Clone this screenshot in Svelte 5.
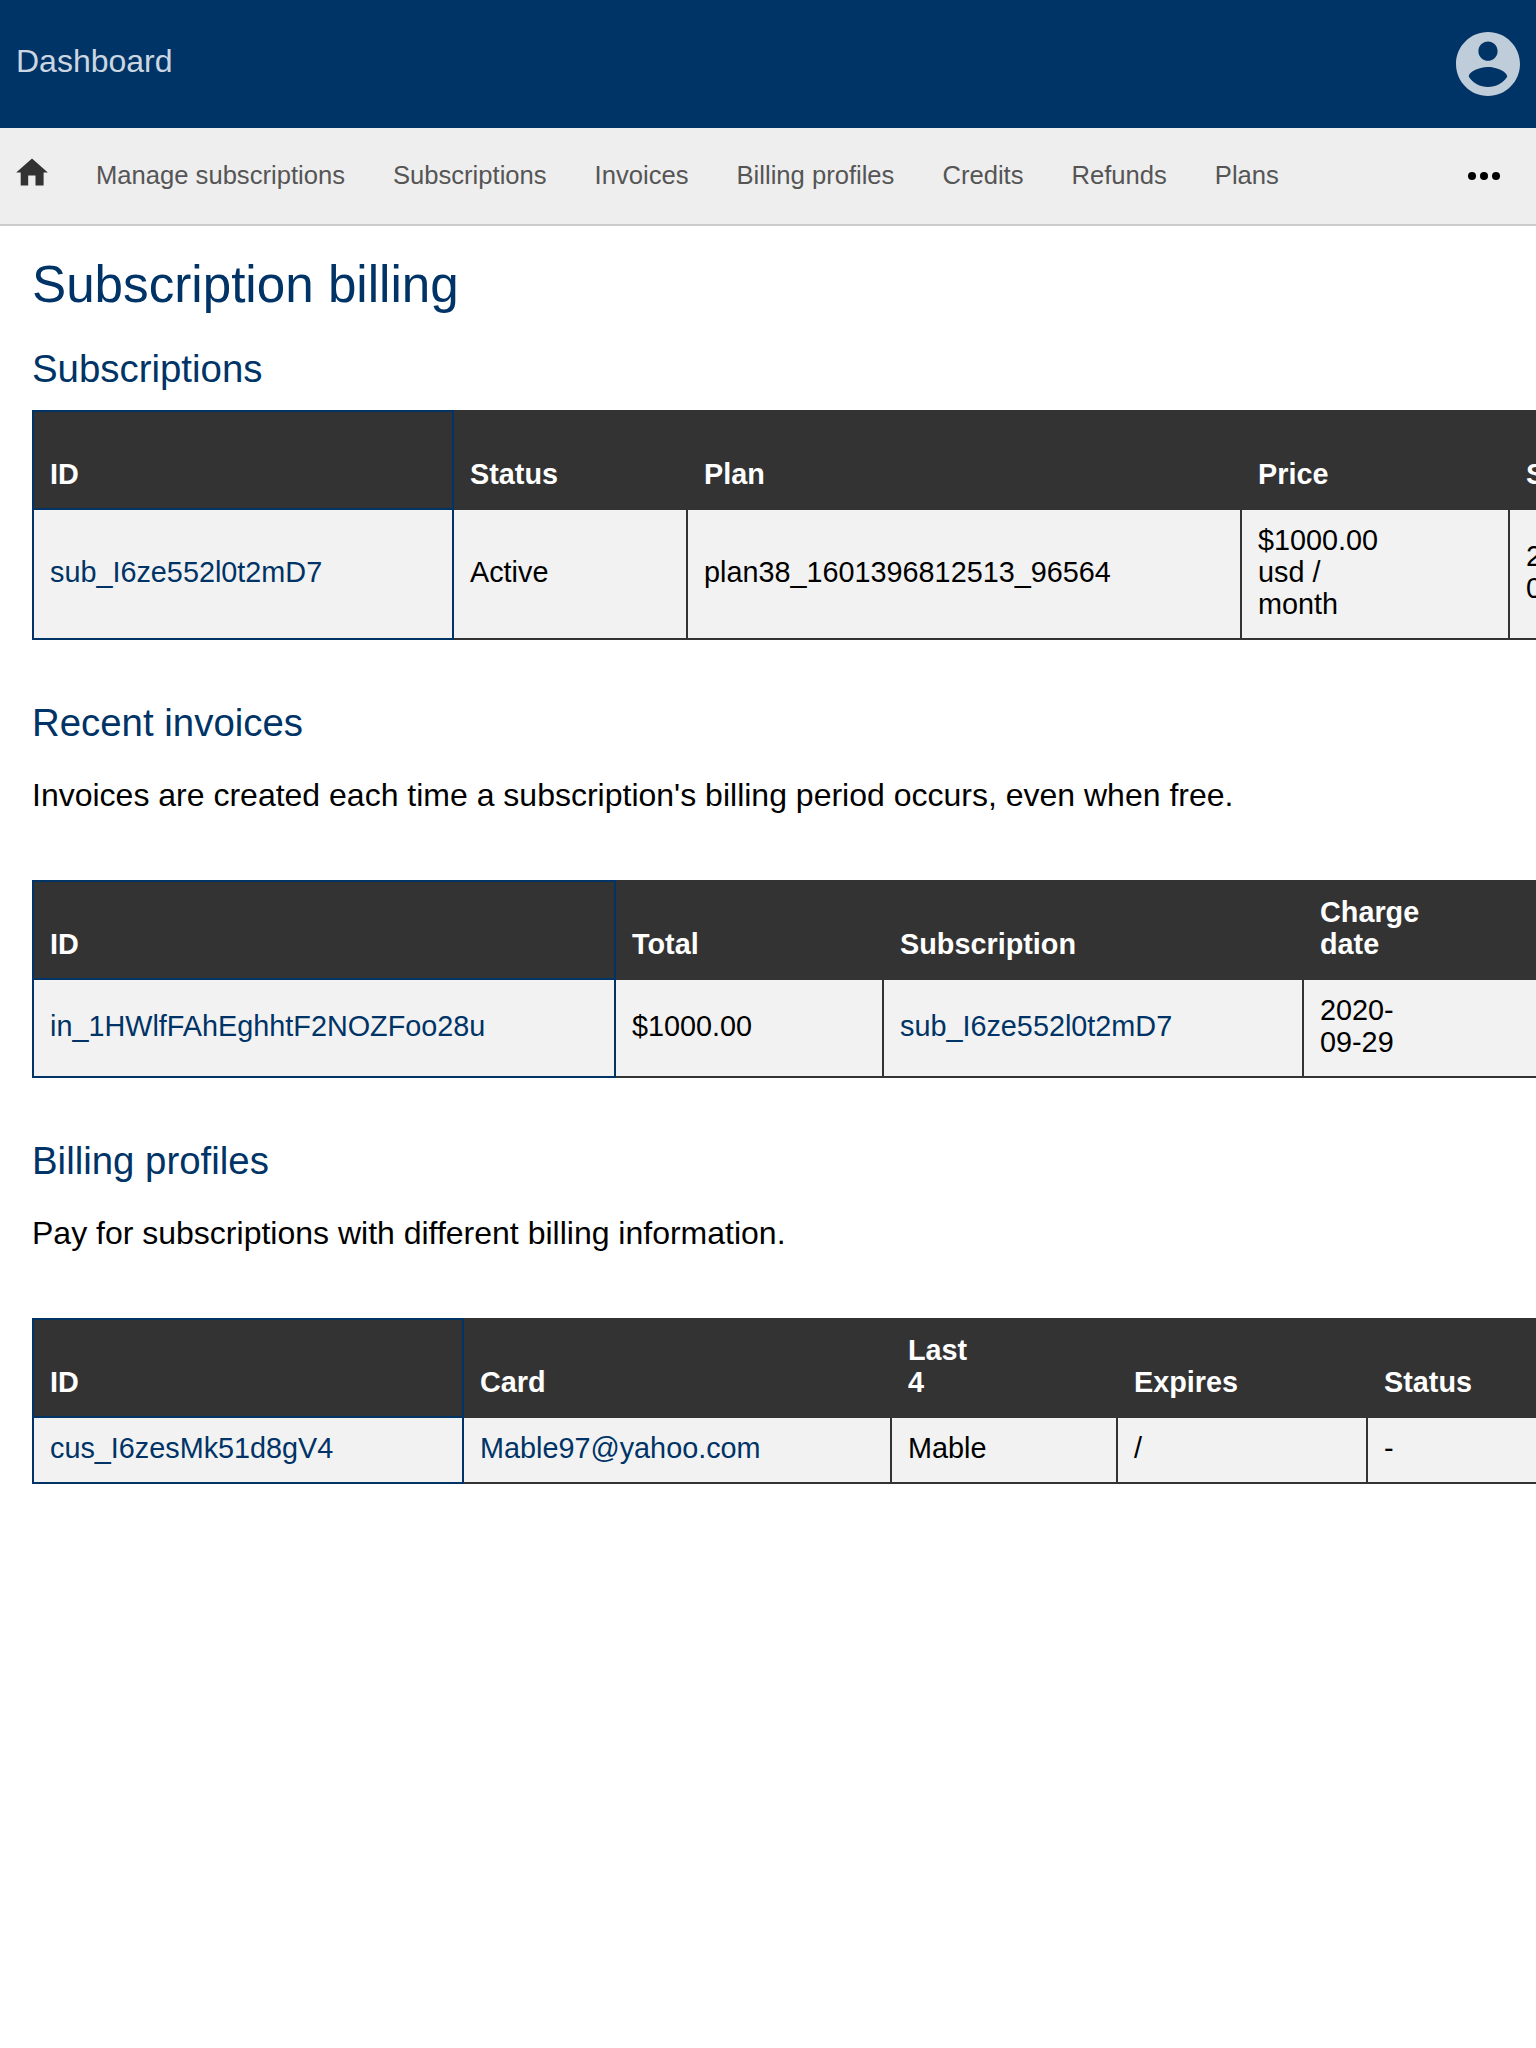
<script>
  const navItems = ['Manage subscriptions', 'Subscriptions', 'Invoices', 'Billing profiles', 'Credits', 'Refunds', 'Plans'];

  const sections = [
    {
      title: 'Subscriptions',
      widths: [420, 234, 554, 268, 320],
      headers: ['ID', 'Status', 'Plan', 'Price', 'Start date'],
      row: [
        { text: 'sub_I6ze552l0t2mD7', link: true },
        { text: 'Active' },
        { text: 'plan38_1601396812513_96564' },
        { text: '$1000.00\nusd /\nmonth' },
        { text: '2020-\n09-29' }
      ]
    },
    {
      title: 'Recent invoices',
      note: "Invoices are created each time a subscription's billing period occurs, even when free.",
      widths: [582, 268, 420, 320],
      headers: ['ID', 'Total', 'Subscription', 'Charge\ndate'],
      row: [
        { text: 'in_1HWlfFAhEghhtF2NOZFoo28u', link: true },
        { text: '$1000.00' },
        { text: 'sub_I6ze552l0t2mD7', link: true },
        { text: '2020-\n09-29' }
      ]
    },
    {
      title: 'Billing profiles',
      note: 'Pay for subscriptions with different billing information.',
      widths: [430, 428, 226, 250, 320],
      headers: ['ID', 'Card', 'Last\n4', 'Expires', 'Status'],
      row: [
        { text: 'cus_I6zesMk51d8gV4', link: true },
        { text: 'Mable97@yahoo.com', link: true },
        { text: 'Mable' },
        { text: '/' },
        { text: '-' }
      ]
    }
  ];
</script>

<div class="page">
  <header>
    <a href="#dashboard">Dashboard</a>
    <svg class="account" viewBox="2 2 20 20" aria-hidden="true">
      <path d="M12 2C6.48 2 2 6.48 2 12s4.48 10 10 10 10-4.48 10-10S17.52 2 12 2zm0 3c1.66 0 3 1.34 3 3s-1.34 3-3 3-3-1.34-3-3 1.34-3 3-3zm0 14.2c-2.5 0-4.71-1.28-6-3.22.03-1.99 4-3.08 6-3.08 1.99 0 5.97 1.09 6 3.08-1.29 1.94-3.5 3.22-6 3.22z" />
    </svg>
  </header>

  <nav>
    <svg class="home" viewBox="0 0 32 28" aria-hidden="true">
      <path d="M16 0.5 31.8 14.5H27.6V27.6H19.5V17.6H12.2V27.6H4.7V14.5H0.2z" />
    </svg>
    {#each navItems as item}
      <a href="#nav">{item}</a>
    {/each}
    <svg class="more" viewBox="0 0 32 8" aria-hidden="true">
      <circle cx="4" cy="4" r="4" /><circle cx="16" cy="4" r="4" /><circle cx="28" cy="4" r="4" />
    </svg>
  </nav>

  <main>
    <h1>Subscription billing</h1>
    {#each sections as section}
      <section>
        <h2>{section.title}</h2>
        {#if section.note}<p>{section.note}</p>{/if}
        <table style:width="{section.widths.reduce((a, b) => a + b, 0)}px">
          <colgroup>
            {#each section.widths as width}<col style:width="{width}px" />{/each}
          </colgroup>
          <thead>
            <tr>{#each section.headers as header}<th>{header}</th>{/each}</tr>
          </thead>
          <tbody>
            <tr>
              {#each section.row as cell}
                <td>{#if cell.link}<a href="#item">{cell.text}</a>{:else}{cell.text}{/if}</td>
              {/each}
            </tr>
          </tbody>
        </table>
      </section>
    {/each}
  </main>
</div>

<style>
  :global(body) {
    background: #fff;
  }
  .page {
    min-height: 2048px;
    overflow: hidden;
    font: 32px/1.15 'Liberation Sans', Arial, sans-serif;
    color: #000;
  }
  a {
    color: #036;
    text-decoration: none;
  }
  header {
    box-sizing: border-box;
    height: 128px;
    padding: 0 16px;
    display: flex;
    align-items: center;
    justify-content: space-between;
    background: #036;
  }
  header a {
    color: #ccd6e0;
    padding-bottom: 6px;
  }
  .account {
    width: 64px;
    height: 64px;
    fill: #bfccd9;
  }
  nav {
    box-sizing: border-box;
    height: 98px;
    padding: 0 36px 0 16px;
    display: flex;
    align-items: center;
    gap: 48px;
    background: #eee;
    border-bottom: 2px solid #ccc;
    font-size: 25.6px;
  }
  nav a {
    color: #555;
  }
  .home {
    width: 32px;
    height: 28px;
    margin-bottom: 8px;
    fill: #333;
  }
  .more {
    width: 32px;
    height: 8px;
    margin-left: auto;
  }
  main {
    padding: 30px 32px 0;
  }
  h1,
  h2 {
    margin: 0;
    font-weight: 400;
    color: #036;
  }
  h1 {
    font-size: 51.2px;
    line-height: 57px;
  }
  h2 {
    font-size: 38.4px;
    line-height: 43px;
  }
  section {
    padding: 34px 0 27px;
  }
  section p {
    margin: 33px 0 67px;
    line-height: 36px;
  }
  table {
    margin-top: 20px;
    border-collapse: collapse;
    table-layout: fixed;
    font-size: 28.8px;
    line-height: 32px;
  }
  th,
  td {
    padding: 14px 16px 18px;
    border: 2px solid #333;
    text-align: left;
    white-space: pre-line;
  }
  th {
    height: 64px;
    background: #333;
    color: #fff;
    vertical-align: bottom;
  }
  td {
    background: #f2f2f2;
    vertical-align: middle;
  }
  th:first-child,
  td:first-child {
    border-color: #036;
  }
</style>
